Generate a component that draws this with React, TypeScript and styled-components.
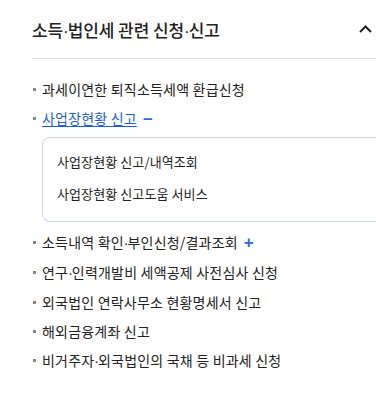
import React from "react";
import styled, { createGlobalStyle } from "styled-components";

const Global = createGlobalStyle`
  html, body { margin: 0; padding: 0; background: #fff; }
  body { font-family: "Noto Sans CJK KR", "Noto Sans", sans-serif; color: #222; }
`;

const Panel = styled.section`
  width: 376px;
  padding: 0 0 0 32px;
  box-sizing: border-box;
`;

const Header = styled.div`
  display: flex;
  align-items: center;
  justify-content: space-between;
  height: 59px;
  border-bottom: 1px solid #dcdcdc;
  padding-right: 4px;
  padding-top: 1px;
  box-sizing: border-box;
`;

const Title = styled.h2`
  margin: 0;
  font-size: 17px;
  font-weight: 500;
  color: #222;
  letter-spacing: -0.1px;
`;

const Dot = styled.span`
  font-family: "Liberation Sans", sans-serif;
  letter-spacing: -1px;
`;

const Toggle = styled.span`
  display: flex;
  width: 14px;
  height: 14px;
  align-items: center;
  justify-content: center;
  margin-top: -2px;
`;

const List = styled.ul`
  list-style: none;
  margin: 0;
  padding: 16px 0 0;
`;

const Item = styled.li`
  position: relative;
  padding-left: 10px;
  font-size: 14px;
  line-height: 29px;
  color: #222;
  letter-spacing: 0.2px;
  &::before {
    content: "";
    position: absolute;
    left: 1px;
    top: 13px;
    width: 3px;
    height: 3px;
    background: #888;
  }
`;

const Link = styled.a<{ $active?: boolean }>`
  color: ${(p) => (p.$active ? "#1c5fd6" : "#222")};
  text-decoration: ${(p) => (p.$active ? "underline" : "none")};
  text-underline-offset: 2px;
`;

const Sign = styled.span`
  color: #2b6ae0;
  margin-left: 6px;
  font-family: "Liberation Sans", sans-serif;
  font-size: 17px;
  font-weight: 700;
`;

const SubBox = styled.div`
  margin: 4px 0 6px 0;
  border: 1px solid #c9d8f0;
  border-right: none;
  border-radius: 8px 0 0 8px;
  padding: 8px 14px 11px;
  display: flex;
  flex-direction: column;
`;

const SubItem = styled.a`
  font-size: 13px;
  line-height: 32px;
  letter-spacing: 0.1px;
  color: #222;
  text-decoration: none;
`;

const Chevron = () => (
  <svg width="13" height="8" viewBox="0 0 13 8" fill="none">
    <path d="M1 7L6.5 1.5L12 7" stroke="#222" strokeWidth="2" />
  </svg>
);

const D = () => <Dot>·</Dot>;

export default function App() {
  return (
    <>
      <Global />
      <Panel>
        <Header>
          <Title>
            소득<D />법인세 관련 신청<D />신고
          </Title>
          <Toggle>
            <Chevron />
          </Toggle>
        </Header>
        <List>
          <Item>
            <Link>과세이연한 퇴직소득세액 환급신청</Link>
          </Item>
          <Item>
            <Link $active>사업장현황 신고</Link>
            <Sign>–</Sign>
            <SubBox>
              <SubItem>사업장현황 신고/내역조회</SubItem>
              <SubItem>사업장현황 신고도움 서비스</SubItem>
            </SubBox>
          </Item>
          <Item>
            <Link>소득내역 확인<D />부인신청/결과조회</Link>
            <Sign>+</Sign>
          </Item>
          <Item>
            <Link>연구<D />인력개발비 세액공제 사전심사 신청</Link>
          </Item>
          <Item>
            <Link>외국법인 연락사무소 현황명세서 신고</Link>
          </Item>
          <Item>
            <Link>해외금융계좌 신고</Link>
          </Item>
          <Item>
            <Link>비거주자<D />외국법인의 국채 등 비과세 신청</Link>
          </Item>
        </List>
      </Panel>
    </>
  );
}
